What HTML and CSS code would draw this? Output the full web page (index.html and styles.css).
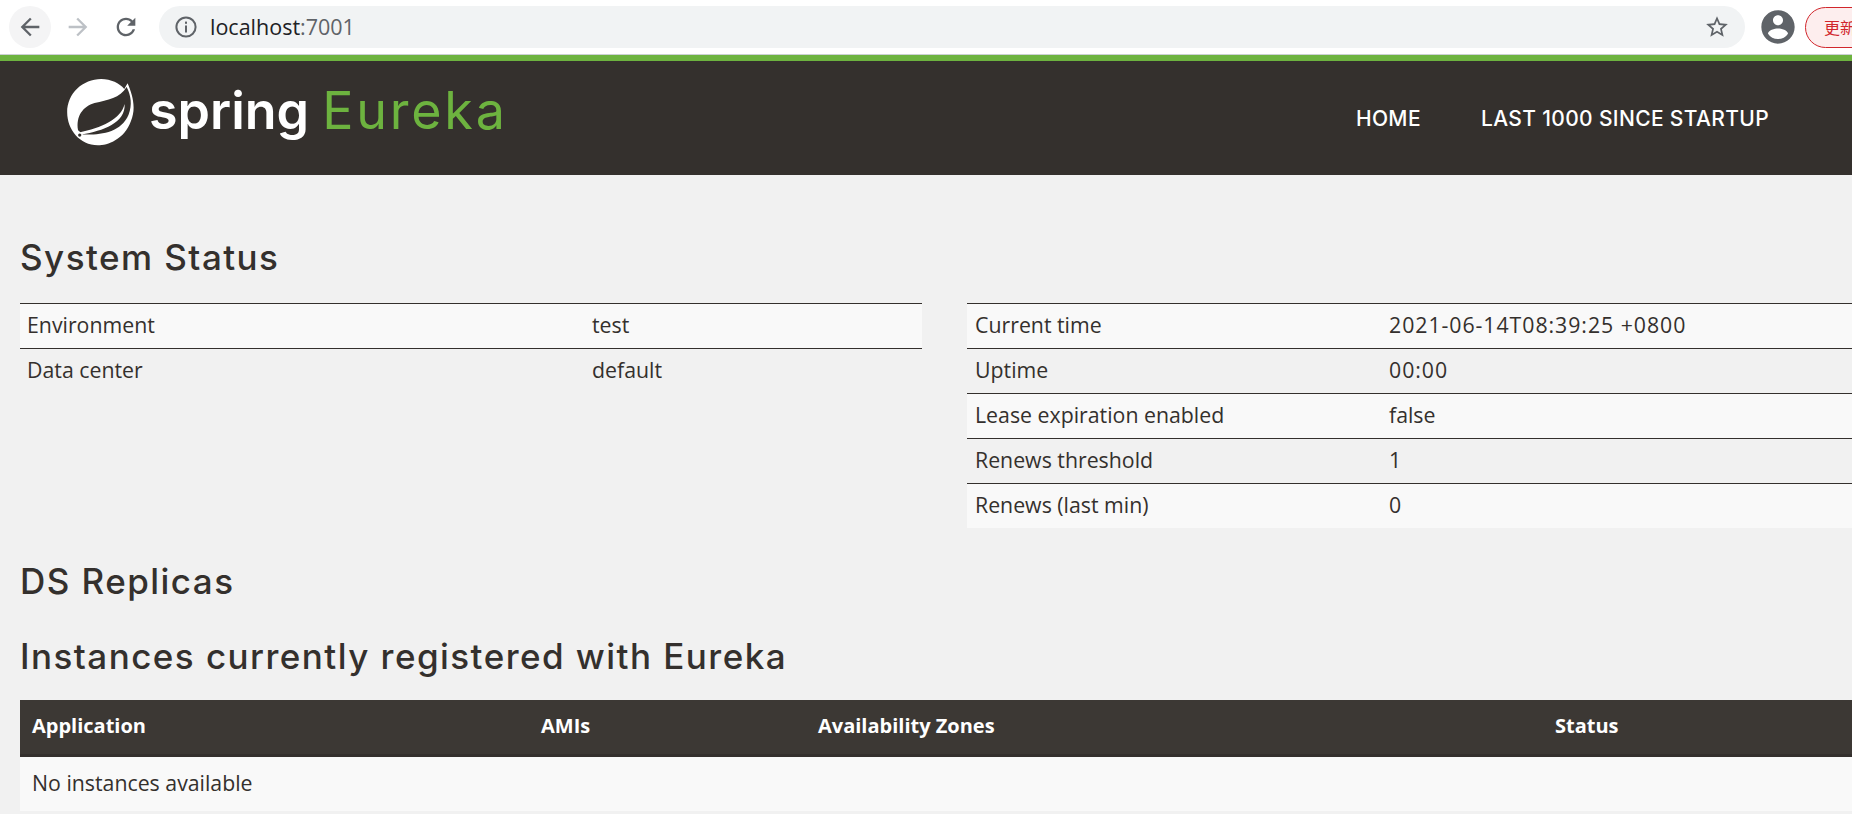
FILE: index.html
```html
<!DOCTYPE html>
<html lang="en">
<head>
<meta charset="utf-8">
<title>Eureka</title>
<link rel="stylesheet" href="styles.css">
</head>
<body>
<div class="chrome">
  <span class="nav-btn hover"><svg class="ic" viewBox="0 0 24 24"><path fill="#5f6368" d="M20 11H7.83l5.59-5.59L12 4l-8 8 8 8 1.41-1.41L7.83 13H20v-2z"/></svg></span>
  <span class="nav-btn"><svg class="ic" viewBox="0 0 24 24"><path fill="#bdc1c6" d="M12 4l-1.41 1.41L16.17 11H4v2h12.17l-5.58 5.59L12 20l8-8z"/></svg></span>
  <span class="nav-btn"><svg class="ic" viewBox="0 0 24 24"><path fill="#5f6368" d="M17.65 6.35C16.2 4.9 14.21 4 12 4c-4.42 0-7.99 3.58-7.99 8s3.57 8 7.99 8c3.73 0 6.84-2.55 7.73-6h-2.08c-.82 2.33-3.04 4-5.65 4-3.31 0-6-2.69-6-6s2.69-6 6-6c1.66 0 3.14.69 4.22 1.78L13 11h7V4l-2.35 2.35z"/></svg></span>
  <div class="omnibox">
    <svg class="info" viewBox="0 0 24 24"><circle cx="12" cy="12" r="9.6" fill="none" stroke="#5f6368" stroke-width="2"/><rect x="11" y="10.5" width="2" height="7" fill="#5f6368"/><rect x="11" y="6.6" width="2" height="2.2" fill="#5f6368"/></svg>
    <span class="url">localhost<span class="port">:7001</span></span>
    <svg class="star" viewBox="0 0 24 24"><path fill="#5f6368" d="M22 9.24l-7.19-.62L12 2 9.19 8.63 2 9.24l5.46 4.73L5.82 21 12 17.27 18.18 21l-1.63-7.03L22 9.24zM12 15.4l-3.76 2.27 1-4.28-3.32-2.88 4.38-.38L12 6.1l1.71 4.04 4.38.38-3.32 2.88 1 4.28L12 15.4z"/></svg>
  </div>
  <svg class="avatar" viewBox="0 0 24 24"><path fill="#5f6368" d="M12 2C6.48 2 2 6.48 2 12s4.48 10 10 10 10-4.48 10-10S17.52 2 12 2zm0 3c1.66 0 3 1.34 3 3s-1.34 3-3 3-3-1.34-3-3 1.34-3 3-3zm0 14.2c-2.5 0-4.71-1.28-6-3.22.03-1.99 4-3.08 6-3.08 1.99 0 5.97 1.09 6 3.08-1.29 1.94-3.5 3.22-6 3.22z"/></svg>
  <span class="update">更新</span>
</div>
<header class="navbar">
  <div class="brand">
    <svg class="leaf" viewBox="52 42 205 203">
      <path fill="#fff" d="M235 55C250 90 262 130 245 170C225 225 175 243 145 243C90 243 52 195 52 143C52 85 100 42 155 42C185 42 210 55 225 72Z"/>
      <path fill="#34302d" d="M232 66C212 100 175 105 135 115C100 125 78 155 85 197L100 210C150 212 215 205 238 150C250 120 245 90 232 66Z"/>
      <path fill="#fff" d="M226 118C215 165 155 190 88 204L96 210C160 200 230 175 226 118Z"/>
      <circle cx="90" cy="212" r="5" fill="#34302d"/>
    </svg>
    <span class="spring">spring</span>
    <span class="eureka">Eureka</span>
  </div>
  <nav class="links">
    <a>HOME</a>
    <a>LAST 1000 SINCE STARTUP</a>
  </nav>
</header>
<main class="main">
  <h1 class="title first">System Status</h1>
  <div class="status">
    <table class="tbl left">
      <tr class="odd"><td class="k">Environment</td><td>test</td></tr>
      <tr><td class="k">Data center</td><td>default</td></tr>
    </table>
    <table class="tbl right">
      <tr class="odd"><td class="k">Current time</td><td class="num">2021-06-14T08:39:25 +0800</td></tr>
      <tr><td class="k">Uptime</td><td class="num">00:00</td></tr>
      <tr class="odd"><td class="k">Lease expiration enabled</td><td>false</td></tr>
      <tr><td class="k">Renews threshold</td><td>1</td></tr>
      <tr class="odd"><td class="k">Renews (last min)</td><td>0</td></tr>
    </table>
  </div>
  <h1 class="title">DS Replicas</h1>
  <h1 class="title gap">Instances currently registered with Eureka</h1>
  <table class="tbl instances">
    <thead>
      <tr><th class="c1">Application</th><th class="c2">AMIs</th><th class="c3">Availability Zones</th><th class="c4">Status</th></tr>
    </thead>
    <tbody>
      <tr class="odd"><td colspan="4">No instances available</td></tr>
    </tbody>
  </table>
</main>
</body>
</html>
```
FILE: styles.css
```css
html, body {
  margin: 0;
  padding: 0;
  height: 814px;
  overflow: hidden;
}
body {
  background: #f1f1f1;
  color: #34302d;
  font-family: "Open Sans", "Noto Sans", sans-serif;
  width: 1852px;
}
.chrome {
  display: flex;
  align-items: center;
  height: 54px;
  background: #fff;
  border-bottom: 1px solid #ccd0d4;
  padding-left: 9px;
  gap: 6px;
  overflow: hidden;
}
.nav-btn {
  width: 42px;
  height: 42px;
  border-radius: 50%;
  display: flex;
  align-items: center;
  justify-content: center;
  flex: none;
}
.nav-btn.hover { background: #f4f4f5; }
.ic { width: 28px; height: 28px; }
.omnibox {
  flex: none;
  width: 1586px;
  height: 42px;
  background: #f1f3f4;
  border-radius: 21px;
  display: flex;
  align-items: center;
  margin-left: 6px;
  padding: 0 15px 0 15px;
  box-sizing: border-box;
}
.info { width: 24px; height: 24px; flex: none; }
.url {
  margin-left: 12px;
  padding-bottom: 2px;
  font-size: 21.5px;
  color: #202124;
  flex: 1;
}
.port { color: #5f6368; }
.star { width: 26px; height: 26px; flex: none; }
.avatar { width: 40px; height: 40px; flex: none; margin-left: 7px; }
.update {
  flex: none;
  margin-left: 1px;
  width: 90px;
  height: 39px;
  border: 1px solid #d1262c;
  border-radius: 21px;
  background: #fdeeee;
  color: #d1262c;
  font-size: 16px;
  line-height: 39px;
  padding-left: 18px;
  font-family: "Noto Sans CJK SC", sans-serif;
}
.navbar {
  height: 114px;
  background: #34302d;
  border-top: 6px solid #6db33f;
  display: flex;
  justify-content: space-between;
}
.brand {
  display: flex;
  align-items: baseline;
  padding: 18px 0 0 67px;
  color: #fff;
  height: 60px;
}
.leaf { width: 68px; height: 67px; align-self: flex-start; flex: none; }
.spring {
  margin-left: 14px;
  font-family: Inter, sans-serif;
  font-size: 52px;
  font-weight: 600;
}
.eureka {
  margin-left: 13px;
  color: #6db33f;
  font-family: Inter, sans-serif;
  font-size: 52px;
  font-weight: 400;
  letter-spacing: 2.8px;
}
.links {
  display: flex;
  gap: 60px;
  padding: 45px 83px 0 0;
}
.links a {
  color: #fff;
  font-family: Inter, sans-serif;
  font-size: 21px;
  font-weight: 500;
  line-height: 26px;
  letter-spacing: .35px;
}
.main { padding-left: 20px; }
.title {
  margin: 34px 0 0;
  font-family: Inter, sans-serif;
  font-size: 35px;
  font-weight: 500;
  line-height: 40px;
  letter-spacing: 1.45px;
}
.title.first { margin-top: 62px; }
.title.gap { margin-top: 35px; }
.status {
  display: flex;
  align-items: flex-start;
  gap: 45px;
  margin-top: 26px;
  height: 224px;
}
.tbl {
  border-collapse: collapse;
  font-size: 21.3px;
  flex: none;
  table-layout: fixed;
}
.tbl td, .tbl th {
  padding: 0 0 4px 7px;
  height: 40px;
  text-align: left;
  border-top: 1px solid #34302d;
  font-weight: 400;
}
.tbl .odd td { background: #f9f9f9; }
.tbl td.num { letter-spacing: .95px; }
.left { width: 902px; }
.left .k { width: 558px; }
.right { width: 1000px; }
.right .k { width: 406px; }
.right td { padding-left: 8px; }
.instances { width: 1900px; margin-top: 24px; }
.instances th {
  background: #3c3834;
  color: #fff;
  font-size: 20px;
  font-weight: 700;
  height: 51px;
  border-top: 0;
  border-bottom: 3px solid #34302d;
  padding: 0 0 3px 12px;
}
.instances td { border-top: 0; height: 50px; padding: 0 0 4px 12px; }
.c1 { width: 497px; }
.c2 { width: 265px; }
.c3 { width: 725px; }
```
